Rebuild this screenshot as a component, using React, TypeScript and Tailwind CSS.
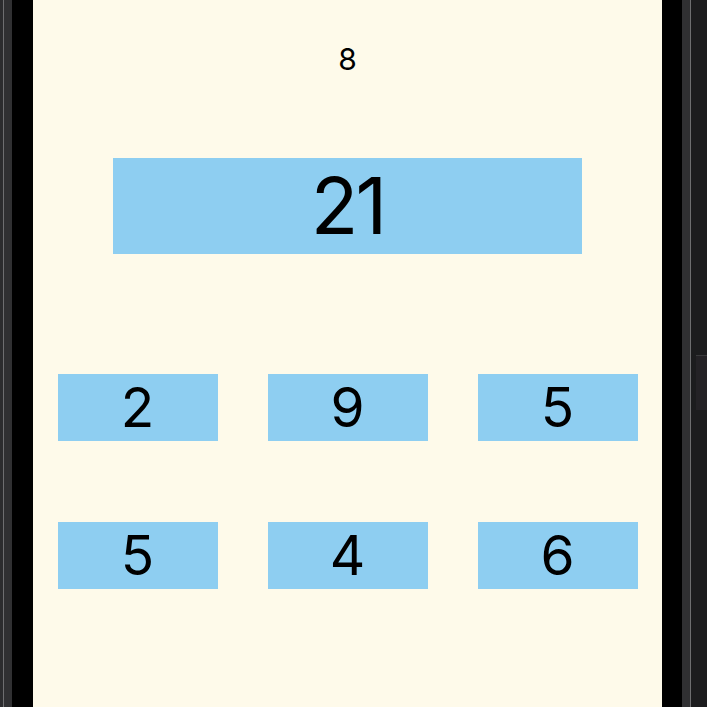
const tiles = [2, 9, 5, 5, 4, 6]

function LeftBezel() {
  return (
    <div className="flex h-full w-[33px] shrink-0">
      <div className="h-full w-[3px] bg-[#2c2c2e]" />
      <div className="h-full w-px bg-[#6e6e70]" />
      <div className="h-full w-[8px] bg-[#303032]" />
      <div className="h-full flex-1 bg-black" />
    </div>
  )
}

function RightBezel() {
  return (
    <div className="flex h-full w-[45px] shrink-0">
      <div className="h-full w-[20px] bg-black" />
      <div className="h-full w-[8px] bg-[#303032]" />
      <div className="h-full w-px bg-[#6e6e70]" />
      <div className="flex h-full flex-1 flex-col bg-[#1c1c1e]">
        <div className="h-[355px]" />
        <div className="ml-[5px] h-[55px] border-t border-[#3a3a3c] bg-[#242226]" />
      </div>
    </div>
  )
}

export default function App() {
  return (
    <div
      className="flex h-[707px] w-[707px] overflow-hidden bg-black"
      style={{ fontFamily: 'Inter, "Noto Sans", sans-serif' }}
    >
      <LeftBezel />
      <div className="flex h-full flex-1 flex-col items-center bg-[#fefaea] text-black">
        <div className="mt-[44px] text-[30px] leading-none">8</div>

        <div className="mt-[84px] flex h-[96px] w-[469px] items-center justify-center bg-[#8ecef1] text-[78px] leading-none tracking-[-3px]">
          21
        </div>

        <div className="mt-[120px] grid grid-cols-3 gap-x-[50px] gap-y-[81px]">
          {tiles.map((value, i) => (
            <div
              key={i}
              className="flex h-[67px] w-[160px] items-center justify-center bg-[#8ecef1] text-[55px] leading-none"
            >
              {value}
            </div>
          ))}
        </div>
      </div>
      <RightBezel />
    </div>
  )
}
